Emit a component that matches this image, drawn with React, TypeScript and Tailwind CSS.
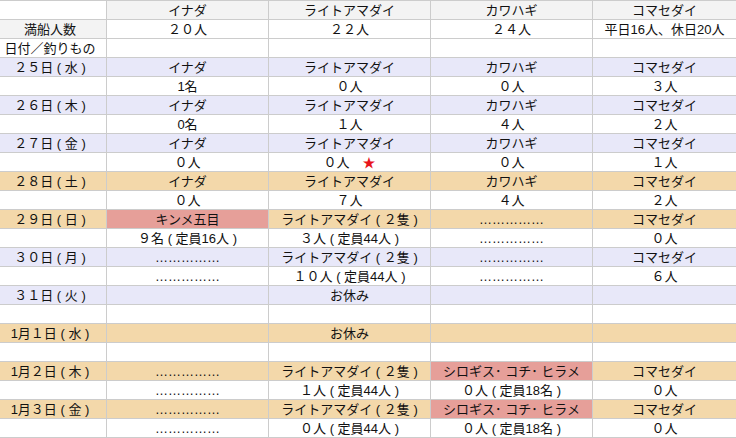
import React from "react";

type Cell = { t?: React.ReactNode; bg?: string };

const L = "bg-[#e8e8f9]";
const T = "bg-[#f3d8aa]";
const P = "bg-[#e69f99]";
const W = "bg-white";
const G = "bg-[#f3f3f3]";
const D = "……………";

type Row = { bg: string; cells: (string | Cell)[] };

const star = (
  <span>
    ０人　<span className="text-[#e8141b]">★</span>
  </span>
);

const SKI = "シロギス･ コチ･ ヒラメ";
const RA2 = "ライトアマダイ ( ２隻 )";

const rows: Row[] = [
  { bg: G, cells: [{ t: "", bg: W }, "イナダ", "ライトアマダイ", "カワハギ", "コマセダイ"] },
  { bg: W, cells: [{ t: "満船人数", bg: G }, "２０人", "２２人", "２４人", "平日16人、休日20人"] },
  { bg: W, cells: ["日付／釣りもの", "", "", "", ""] },
  { bg: L, cells: ["２５日 ( 水 )", "イナダ", "ライトアマダイ", "カワハギ", "コマセダイ"] },
  { bg: W, cells: ["", "1名", "０人", "０人", "３人"] },
  { bg: L, cells: ["２６日 ( 木 )", "イナダ", "ライトアマダイ", "カワハギ", "コマセダイ"] },
  { bg: W, cells: ["", "0名", "１人", "４人", "２人"] },
  { bg: L, cells: ["２７日 ( 金 )", "イナダ", "ライトアマダイ", "カワハギ", "コマセダイ"] },
  { bg: W, cells: ["", "０人", { t: star }, "０人", "１人"] },
  { bg: T, cells: ["２８日 ( 土 )", "イナダ", "ライトアマダイ", "カワハギ", "コマセダイ"] },
  { bg: W, cells: ["", "０人", "７人", "４人", "２人"] },
  { bg: T, cells: ["２９日 ( 日 )", { t: "キンメ五目", bg: P }, RA2, D, "コマセダイ"] },
  { bg: W, cells: ["", "９名 ( 定員16人 )", "３人 ( 定員44人 )", D, "０人"] },
  { bg: L, cells: ["３０日 ( 月 )", D, RA2, D, "コマセダイ"] },
  { bg: W, cells: ["", D, "１０人 ( 定員44人 )", D, "６人"] },
  { bg: L, cells: ["３１日 ( 火 )", "", "お休み", "", ""] },
  { bg: W, cells: ["", "", "", "", ""] },
  { bg: T, cells: ["1月１日 ( 水 )", "", "お休み", "", ""] },
  { bg: W, cells: ["", "", "", "", ""] },
  { bg: T, cells: ["1月２日 ( 木 )", D, RA2, { t: SKI, bg: P }, "コマセダイ"] },
  { bg: W, cells: ["", D, "１人 ( 定員44人 )", "０人 ( 定員18名 )", "０人"] },
  { bg: T, cells: ["1月３日 ( 金 )", D, RA2, { t: SKI, bg: P }, "コマセダイ"] },
  { bg: W, cells: ["", D, "０人 ( 定員44人 )", "０人 ( 定員18名 )", "０人"] },
];

export default function App() {
  return (
    <div
      className="w-[736px] h-[438px] overflow-hidden bg-white text-[13px] text-[#111]"
      style={{ fontFamily: '"Liberation Sans", "Noto Sans CJK JP", sans-serif' }}
    >
      <div className="grid grid-cols-[106px_161px_161px_161px_143px] auto-rows-[18px] gap-px bg-[#cccccc] pt-px pb-px">
        {rows.map((r, i) =>
          r.cells.map((c, j) => {
            const cell: Cell = typeof c === "string" ? { t: c } : c;
            return (
              <div
                key={`${i}-${j}`}
                className={`${cell.bg ?? r.bg} ${j === 0 ? "pr-[6px]" : ""} flex items-center justify-center whitespace-pre overflow-hidden leading-none`}
              >
                {cell.t}
              </div>
            );
          })
        )}
      </div>
    </div>
  );
}
